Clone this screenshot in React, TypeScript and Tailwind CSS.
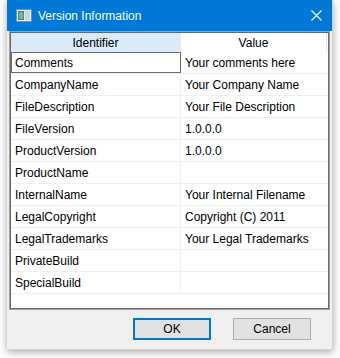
import React from 'react';

const rows: [string, string][] = [
  ['Comments', 'Your comments here'],
  ['CompanyName', 'Your Company Name'],
  ['FileDescription', 'Your File Description'],
  ['FileVersion', '1.0.0.0'],
  ['ProductVersion', '1.0.0.0'],
  ['ProductName', ''],
  ['InternalName', 'Your Internal Filename'],
  ['LegalCopyright', 'Copyright (C) 2011'],
  ['LegalTrademarks', 'Your Legal Trademarks'],
  ['PrivateBuild', ''],
  ['SpecialBuild', ''],
];

const AppIcon = () => (
  <svg width="16" height="13" viewBox="0 0 16 13">
    <rect x="0.5" y="0.5" width="15" height="12" fill="#e8e8e8" stroke="#8a8a8a" />
    <rect x="2" y="2" width="6" height="9" fill="#3f8f6f" />
    <rect x="3" y="3" width="4" height="7" fill="#6fb79a" />
    <rect x="9" y="2" width="5" height="9" fill="#c8d8e0" />
  </svg>
);

const CloseIcon = () => (
  <svg width="11" height="11" viewBox="0 0 11 11">
    <path d="M0.5 0.5 L10.5 10.5 M10.5 0.5 L0.5 10.5" stroke="white" strokeWidth="1.2" />
  </svg>
);

export default function App() {
  return (
    <div className="w-[340px] h-[358px] bg-white overflow-hidden font-['Liberation_Sans',sans-serif]">
      <div className="ml-[7px] w-[326px] h-[350px] flex flex-col bg-[#f0f0f0] shadow-[0_2px_8px_rgba(0,0,0,0.35)] border-r border-b border-[#d4d4d4]">
        {/* Title bar */}
        <div className="h-[31px] shrink-0 bg-[#0078d7] flex items-center pl-[9px] pr-[10px]">
          <AppIcon />
          <span className="ml-[6px] text-white text-[12px]">Version Information</span>
          <div className="ml-auto flex items-center">
            <CloseIcon />
          </div>
        </div>

        {/* List view */}
        <div className="mx-[2px] h-[279px] shrink-0 border border-[#a0a0a0] bg-white">
          <div className="h-full border border-[#696969] flex flex-col text-[12px] text-black">
            <div className="h-[19px] shrink-0 flex">
              <div className="w-[170px] bg-[#d9ebf9] flex items-center justify-center border-r border-[#e5e5e5]">Identifier</div>
              <div className="w-[146px] flex items-center justify-center border-r border-[#e5e5e5]">Value</div>
            </div>
            <div className="flex flex-col">
              {rows.map(([id, val], i) => (
                <div key={id} className="h-[22px] flex border-b border-[#f0f0f0]">
                  <div
                    className={
                      i === 0
                        ? 'w-[170px] flex items-center pl-[3px] border border-[#6d6d6d]'
                        : 'w-[170px] flex items-center pl-[4px] border-r border-[#f0f0f0]'
                    }
                  >
                    {id}
                  </div>
                  <div className="w-[146px] flex items-center pl-[4px]">{val}</div>
                </div>
              ))}
            </div>
          </div>
        </div>

        {/* Buttons */}
        <div className="flex justify-end gap-[22px] pr-[21px] pt-[8px] text-[12px]">
          <button className="w-[78px] h-[22px] bg-[#e1e1e1] border-2 border-[#0078d7] flex items-center justify-center">OK</button>
          <button className="w-[78px] h-[22px] bg-[#e1e1e1] border border-[#adadad] flex items-center justify-center">Cancel</button>
        </div>
      </div>
    </div>
  );
}
